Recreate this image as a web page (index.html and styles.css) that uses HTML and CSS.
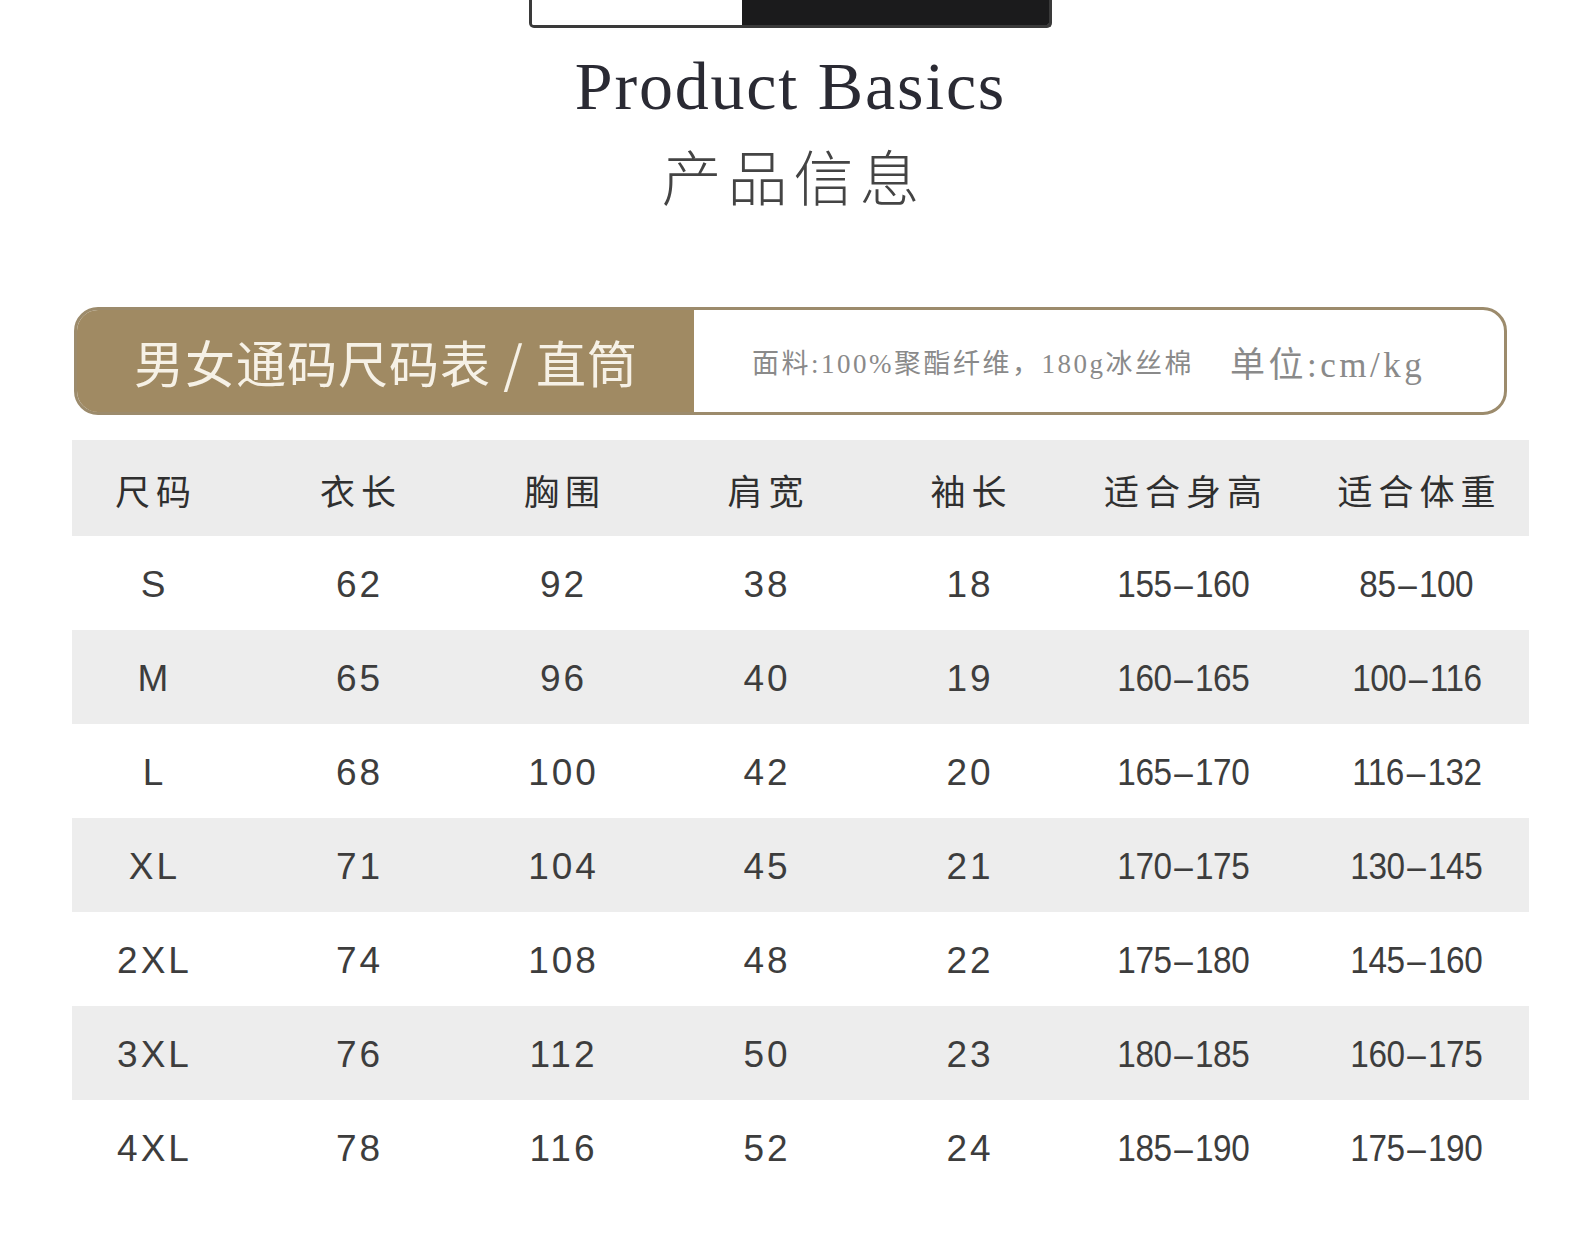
FILE: index.html
```html
<!DOCTYPE html>
<html lang="zh-CN">
<head>
<meta charset="utf-8">
<title>Product Basics 产品信息</title>
<link rel="stylesheet" href="styles.css">
</head>
<body>
<div class="page">
  <div class="topbar"><div class="tb-white"></div><div class="tb-black"></div></div>

  <h1 class="title-en">Product Basics</h1>
  <h2 class="title-cn">产品信息</h2>

  <div class="banner">
    <div class="banner-left">男女通码尺码表 / 直筒</div>
    <div class="banner-right">
      <span class="fabric">面料:100%聚酯纤维，180g冰丝棉</span>
      <span class="unit">单位:cm/kg</span>
    </div>
  </div>

  <div class="table">
    <div class="row head">
      <div class="cell c1">尺码</div><div class="cell">衣长</div><div class="cell">胸围</div><div class="cell">肩宽</div><div class="cell">袖长</div><div class="cell">适合身高</div><div class="cell c7">适合体重</div>
    </div>
    <div class="row">
      <div class="cell c1 v">S</div><div class="cell v">62</div><div class="cell v">92</div><div class="cell v">38</div><div class="cell v">18</div><div class="cell r"><span>155<i>–</i>160</span></div><div class="cell c7 r"><span>85<i>–</i>100</span></div>
    </div>
    <div class="row alt">
      <div class="cell c1 v">M</div><div class="cell v">65</div><div class="cell v">96</div><div class="cell v">40</div><div class="cell v">19</div><div class="cell r"><span>160<i>–</i>165</span></div><div class="cell c7 r"><span>100<i>–</i>116</span></div>
    </div>
    <div class="row">
      <div class="cell c1 v">L</div><div class="cell v">68</div><div class="cell v">100</div><div class="cell v">42</div><div class="cell v">20</div><div class="cell r"><span>165<i>–</i>170</span></div><div class="cell c7 r"><span>116<i>–</i>132</span></div>
    </div>
    <div class="row alt">
      <div class="cell c1 v">XL</div><div class="cell v">71</div><div class="cell v">104</div><div class="cell v">45</div><div class="cell v">21</div><div class="cell r"><span>170<i>–</i>175</span></div><div class="cell c7 r"><span>130<i>–</i>145</span></div>
    </div>
    <div class="row">
      <div class="cell c1 v">2XL</div><div class="cell v">74</div><div class="cell v">108</div><div class="cell v">48</div><div class="cell v">22</div><div class="cell r"><span>175<i>–</i>180</span></div><div class="cell c7 r"><span>145<i>–</i>160</span></div>
    </div>
    <div class="row alt">
      <div class="cell c1 v">3XL</div><div class="cell v">76</div><div class="cell v">112</div><div class="cell v">50</div><div class="cell v">23</div><div class="cell r"><span>180<i>–</i>185</span></div><div class="cell c7 r"><span>160<i>–</i>175</span></div>
    </div>
    <div class="row">
      <div class="cell c1 v">4XL</div><div class="cell v">78</div><div class="cell v">116</div><div class="cell v">52</div><div class="cell v">24</div><div class="cell r"><span>185<i>–</i>190</span></div><div class="cell c7 r"><span>175<i>–</i>190</span></div>
    </div>
  </div>
</div>
</body>
</html>
```

FILE: styles.css
```css
* { box-sizing: border-box; }
html, body { margin: 0; padding: 0; background: #ffffff; }
.page {
  width: 1581px;
  min-height: 1240px;
  background: #fff;
  font-family: "Liberation Sans", "Noto Sans CJK SC", sans-serif;
}

.topbar {
  width: 523px;
  height: 28px;
  margin: 0 auto;
  display: flex;
  border: 3px solid #3a3a3a;
  border-top: none;
  border-radius: 0 0 5px 5px;
  overflow: hidden;
}
.tb-white { width: 210px; background: #ffffff; }
.tb-black { flex: 1; background: #1b1b1c; }

.title-en {
  margin: 18px 0 0;
  font-family: "Liberation Serif", "Noto Sans CJK SC", serif;
  font-weight: normal;
  font-size: 68px;
  line-height: 80px;
  letter-spacing: 1.8px;
  text-align: center;
  color: #2a2a33;
}
.title-cn {
  margin: 9px 0 0;
  font-family: "Noto Sans CJK SC", sans-serif;
  font-weight: 300;
  font-size: 60px;
  line-height: 80px;
  letter-spacing: 6px;
  padding-left: 6px;
  text-align: center;
  color: #444444;
}

.banner {
  margin: 92px 74px 0;
  height: 108px;
  display: flex;
  border: 3px solid #9c8b6c;
  border-radius: 24px;
  overflow: hidden;
  background: #fff;
}
.banner-left {
  width: 617px;
  background: #a08a63;
  color: #f6f1e6;
  font-family: "Noto Sans CJK SC", sans-serif;
  font-size: 50px;
  letter-spacing: 1px;
  display: flex;
  align-items: center;
  padding-left: 57px;
  white-space: nowrap;
}
.banner-right {
  flex: 1;
  display: flex;
  align-items: center;
  padding-left: 58px;
  color: #8a8a8a;
  white-space: nowrap;
}
.fabric {
  font-family: "Liberation Serif", "Noto Sans CJK SC", serif;
  font-size: 27px;
  letter-spacing: 2.5px;
}
.unit {
  margin-left: 36px;
  font-family: "Liberation Serif", "Noto Sans CJK SC", serif;
  font-size: 35px;
  letter-spacing: 3.5px;
}

.table {
  margin: 25px 52px 0 72px;
}
.row {
  display: grid;
  grid-template-columns: 184px 204px 204px 203px 203px 226px 1fr;
  height: 94px;
  align-items: center;
}
.row.head {
  height: 96px;
  background: #ececec;
  padding-top: 2px;
}
.row.alt { background: #ededed; }

.cell {
  text-align: center;
  white-space: nowrap;
}
.c1 { padding-right: 22px; }
.c7 { padding-left: 8px; }

.head .cell {
  font-family: "Noto Sans CJK SC", sans-serif;
  font-size: 35px;
  letter-spacing: 6px;
  text-indent: 6px;
  color: #2f2f2f;
}
.cell.v {
  font-family: "Liberation Sans", sans-serif;
  font-size: 37px;
  letter-spacing: 3px;
  text-indent: 3px;
  color: #3d3d3d;
  padding-top: 4px;
}
.cell.r {
  font-family: "Liberation Sans", sans-serif;
  font-size: 37px;
  color: #3d3d3d;
  padding-top: 4px;
}
.cell.r span {
  display: inline-block;
  transform: scaleX(0.9);
  letter-spacing: -0.5px;
}
.cell.r i {
  font-style: normal;
  margin: 0 3px;
}
```
